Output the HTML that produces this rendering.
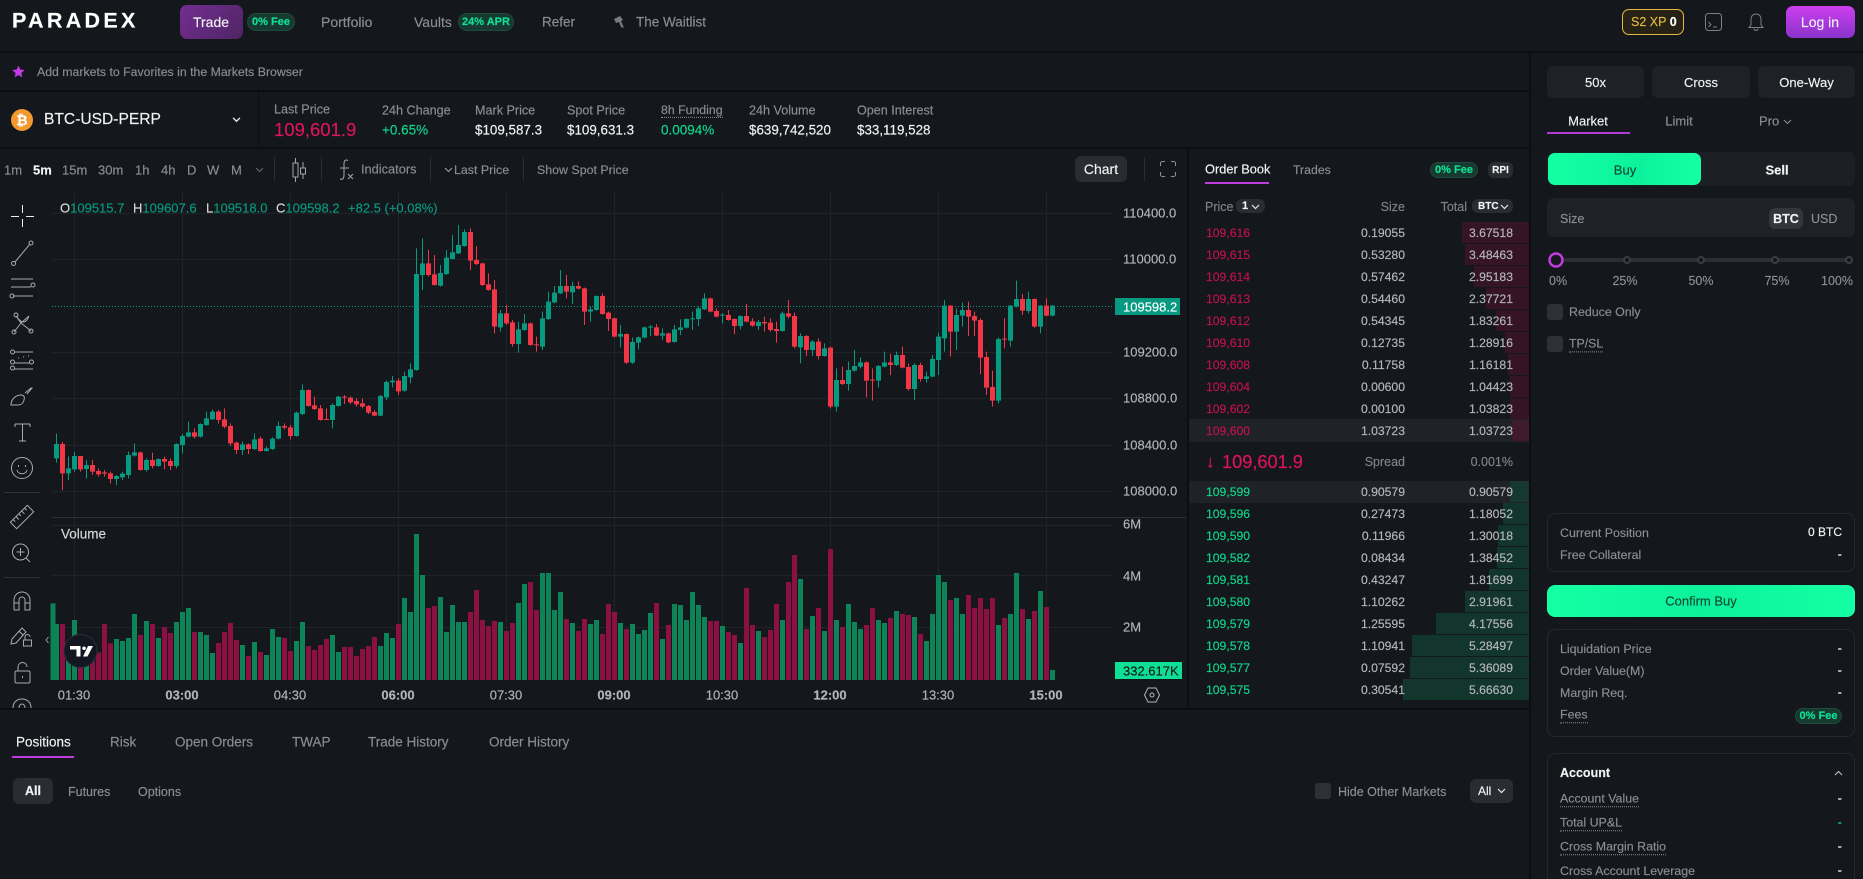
<!DOCTYPE html>
<html><head><meta charset="utf-8"><title>Paradex</title>
<style>
*{box-sizing:border-box}
html,body{margin:0;padding:0;width:1863px;height:879px;overflow:hidden;background:#14171b;font-family:"Liberation Sans",sans-serif;color:#8b8e93;font-size:13px;-webkit-text-stroke:.15px}
#wrap{position:relative;width:1863px;height:879px;overflow:hidden}
.t,.r,.c{position:absolute;white-space:nowrap;line-height:1}
.t{transform:translateY(-50%)}
.r{transform:translate(-100%,-50%)}
.c{transform:translate(-50%,-50%)}
.b{position:absolute}
.w{color:#f2f3f4}
.g{color:#0fd68c}
.pill{position:absolute;background:#173a30;border:1px solid #1f4a3c;color:#10e095;font-weight:bold;font-size:11px;border-radius:9px;display:flex;align-items:center;justify-content:center;white-space:nowrap}
.ln{position:absolute;background:#0c0e11}
.btn{position:absolute;background:#1e2125;border-radius:6px;color:#f2f3f4;display:flex;align-items:center;justify-content:center;font-size:13px}
.ob{font-size:12.2px;color:#b5b7ba}
.box{position:absolute;border:1px solid #25282d;border-radius:8px}
.chk{position:absolute;width:16px;height:16px;background:#2d3036;border-radius:3px}
.u{border-bottom:1px dotted #8b8e93;padding-bottom:2px}
.ax{font-size:13px;color:#b2b5be}
.up{position:absolute;left:1205px;height:2px;background:#c03ae0}
.dp{position:absolute;height:21px}
.p{font-size:12.4px}
svg{position:absolute;overflow:visible}
</style></head><body><div id="wrap">

<!-- separators -->
<div class="ln" style="left:0;top:51px;width:1863px;height:2px"></div>
<div class="ln" style="left:0;top:90px;width:1530px;height:2px"></div>
<div class="ln" style="left:0;top:147px;width:1530px;height:2px"></div>
<div class="ln" style="left:258px;top:92px;width:1px;height:56px"></div>
<div class="ln" style="left:1187px;top:148px;width:2px;height:561px"></div>
<div class="ln" style="left:0;top:708px;width:1530px;height:2px"></div>
<div class="ln" style="left:1529px;top:52px;width:2px;height:827px"></div>

<!-- header -->
<div class="t" style="left:12px;top:21px;font-size:21.5px;font-weight:bold;letter-spacing:3.3px;color:#fff">PARADEX</div>
<div class="b" style="left:180px;top:5px;width:63px;height:34px;border-radius:7px;background:linear-gradient(135deg,#742d92,#4d2563)"></div>
<div class="c w" style="left:211px;top:22px;font-size:14px">Trade</div>
<div class="pill" style="left:247px;top:13px;width:48px;height:18px">0% Fee</div>
<div class="t" style="left:321px;top:22px;font-size:14px">Portfolio</div>
<div class="t" style="left:414px;top:22px;font-size:14px">Vaults</div>
<div class="pill" style="left:458px;top:13px;width:56px;height:18px">24% APR</div>
<div class="t" style="left:542px;top:22px;font-size:13.5px">Refer</div>
<svg style="left:611px;top:14px" width="16" height="16" viewBox="0 0 16 16"><path d="M3 5l6-3 3 4-2 1 3 7-3-1-2-5-3 1z" fill="#777a80"/></svg>
<div class="t" style="left:636px;top:22px;font-size:13.5px">The Waitlist</div>
<div class="b" style="left:1622px;top:9px;width:62px;height:26px;border:1px solid #e5b93f;border-radius:7px;background:#262316"></div>
<div class="t" style="left:1631px;top:22px;font-size:12.5px;color:#e5b93f">S2 XP <b style="color:#fff">0</b></div>
<svg style="left:1705px;top:13px" width="18" height="19" viewBox="0 0 18 19" fill="none" stroke="#7d8085"><rect x=".5" y=".5" width="16" height="17" rx="3"/><path d="M3.500 9l2.500 2.500-2.500 2.500M8 14h4"/></svg>
<svg style="left:1747px;top:13px" width="18" height="19" viewBox="0 0 18 19" fill="none" stroke="#7d8085"><path d="M9 1c-3.500 0-5 2.500-5 5.500V12l-2 2.500h14L14 12V6.500C14 3.500 12.500 1 9 1zM7 15.500c0 2.500 4 2.500 4 0"/></svg>
<div class="b" style="left:1786px;top:6px;width:69px;height:32px;border-radius:7px;background:linear-gradient(180deg,#cb3ef0,#8a33c9)"></div>
<div class="c w" style="left:1820px;top:22px;font-size:14px">Log in</div>

<!-- favorites row -->
<svg style="left:12px;top:65px" width="13" height="13" viewBox="0 0 24 24"><path d="M12 1l3.400 7.400 8 .9-6 5.400 1.700 8L12 18.700 4.900 22.700l1.700-8-6-5.400 8-.9z" fill="#c13ae8"/></svg>
<div class="t" style="left:37px;top:72px;font-size:12.3px">Add markets to Favorites in the Markets Browser</div>

<!-- market info -->
<div class="b" style="left:11px;top:109px;width:22px;height:22px;border-radius:50%;background:#f39a2e"></div>
<div class="c" style="left:22px;top:120px;font-size:14px;color:#fff;font-weight:bold">₿</div>
<div class="t w" style="left:44px;top:120px;font-size:15.600px">BTC-USD-PERP</div>
<svg style="left:232px;top:117px" width="9" height="6" viewBox="0 0 10 7" fill="none" stroke="#e6e6e6" stroke-width="1.600"><path d="M1 1l4 4 4-4"/></svg>
<div class="t" style="left:274px;top:110px;font-size:12.600px">Last Price</div>
<div class="t" style="left:274px;top:130px;font-size:18.500px;color:#e0145c">109,601.9</div>
<div class="t" style="left:382px;top:111px;font-size:12.600px">24h Change</div>
<div class="t g" style="left:382px;top:130px;font-size:13.500px">+0.65%</div>
<div class="t" style="left:475px;top:111px;font-size:12.600px">Mark Price</div>
<div class="t w" style="left:475px;top:130px;font-size:13.400px">$109,587.3</div>
<div class="t" style="left:567px;top:111px;font-size:12.600px">Spot Price</div>
<div class="t w" style="left:567px;top:130px;font-size:13.400px">$109,631.3</div>
<div class="t" style="left:661px;top:111px;font-size:12.300px;border-bottom:1px dotted #8b8e93;padding-bottom:1px">8h Funding</div>
<div class="t g" style="left:661px;top:130px;font-size:13.500px">0.0094%</div>
<div class="t" style="left:749px;top:111px;font-size:12.600px">24h Volume</div>
<div class="t w" style="left:749px;top:130px;font-size:13.400px">$639,742,520</div>
<div class="t" style="left:857px;top:111px;font-size:12.600px">Open Interest</div>
<div class="t w" style="left:857px;top:130px;font-size:13.400px">$33,119,528</div>

<!-- chart toolbar -->
<div class="t" style="left:4px;top:170px">1m</div>
<div class="t w" style="left:33px;top:170px;font-weight:bold">5m</div>
<div class="t" style="left:62px;top:170px">15m</div>
<div class="t" style="left:98px;top:170px">30m</div>
<div class="t" style="left:135px;top:170px">1h</div>
<div class="t" style="left:161px;top:170px">4h</div>
<div class="t" style="left:187px;top:170px">D</div>
<div class="t" style="left:207px;top:170px">W</div>
<div class="t" style="left:231px;top:170px">M</div>
<svg style="left:255px;top:167px" width="9" height="6" viewBox="0 0 9 6" fill="none" stroke="#6b6e73"><path d="M1 1l3.500 3.500L8 1"/></svg>
<div class="b" style="left:274px;top:157px;width:1px;height:24px;background:#2b2e32"></div>
<svg style="left:291px;top:158px" width="16" height="24" viewBox="0 0 16 24" fill="none" stroke="#a4a6aa"><path d="M4.500 0v5M2 5h5v14H2zM4.500 19v5M12 4v6M9.500 10h5v6h-5zM12 16v5"/></svg>
<div class="b" style="left:321px;top:157px;width:1px;height:24px;background:#2b2e32"></div>
<svg style="left:337px;top:159px" width="17" height="22" viewBox="0 0 17 22" fill="none" stroke="#a4a6aa"><path d="M11 1.500C8 0 7 2 7 5v11c0 3-1 5-4 4M3 9h9M11 15l5 5M16 15l-5 5"/></svg>
<div class="t" style="left:361px;top:170px;font-size:12.800px">Indicators</div>
<div class="b" style="left:430px;top:157px;width:1px;height:24px;background:#2b2e32"></div>
<svg style="left:444px;top:167px" width="9" height="6" viewBox="0 0 9 6" fill="none" stroke="#a4a6aa"><path d="M1 1l3.500 3.500L8 1"/></svg>
<div class="t" style="left:454px;top:170px;font-size:12.400px">Last Price</div>
<div class="b" style="left:523px;top:157px;width:1px;height:24px;background:#2b2e32"></div>
<div class="t" style="left:537px;top:170px;font-size:12.400px">Show Spot Price</div>
<div class="btn" style="left:1075px;top:156px;width:52px;height:26px;background:#2a2c32;font-size:14px">Chart</div>
<div class="b" style="left:1144px;top:157px;width:1px;height:24px;background:#2b2e32"></div>
<svg style="left:1160px;top:161px" width="16" height="16" viewBox="0 0 16 16" fill="none" stroke="#8f9195"><path d="M.500 5V2.500a2 2 0 0 1 2-2H5M11 .5h2.500a2 2 0 0 1 2 2V5M15.500 11v2.500a2 2 0 0 1-2 2H11M5 15.500H2.500a2 2 0 0 1-2-2V11"/></svg>

<!-- chart svg -->
<svg style="left:0;top:0" width="1863" height="879" viewBox="0 0 1863 879">
 <g fill="none" stroke="#202327" stroke-width="1">
  <path d="M52 213.500H1113M52 259.500H1113M52 352.500H1113M52 398.500H1113M52 445.500H1113M52 491.500H1113M52 525.500H1113M52 575.500H1113M52 627.500H1113"/>
  <path d="M74.500 192V680M182.500 192V680M290.500 192V680M398.500 192V680M506.500 192V680M614.500 192V680M722.500 192V680M830.500 192V680M938.500 192V680M1046.500 192V680"/>
 </g>
 <path d="M52 517.500H1186" stroke="#2e3135"/>
 <path d="M52 306.500H1113" stroke="#089981" stroke-dasharray="1 2" fill="none"/>
 <!-- volume -->
 <g transform="translate(0,500) scale(1,.33333)" fill="none" stroke-width="5">
  <path stroke="#0c8457" d="M53 310V540M56.500 372V540M68.500 440V540M74.500 360V540M86.500 480V540M116.500 417V540M122.500 423V540M128.500 414V540M134.500 342V540M146.500 363V540M158.500 414V540M176.500 366V540M182.500 336V540M188.500 324V540M200.500 396V540M206.500 405V540M212.500 459V540M242.500 435V540M254.500 426V540M266.500 465V540M272.500 387V540M278.500 411V540M296.500 423V540M302.500 366V540M332.500 405V540M338.500 456V540M380.500 438V540M386.500 399V540M392.500 414V540M404.500 294V540M410.500 336V540M416.500 102V540M422.500 225V540M440.500 291V540M446.500 396V540M452.500 315V540M458.500 366V540M464.500 366V540M500.500 366V540M518.500 309V540M524.500 252V540M542.500 219V540M548.500 219V540M554.500 330V540M560.500 276V540M572.500 369V540M590.500 372V540M596.500 360V540M620.500 369V540M632.500 372V540M638.500 402V540M644.500 390V540M650.500 339V540M662.500 417V540M674.500 312V540M680.500 315V540M686.500 360V540M692.500 276V540M698.500 315V540M704.500 351V540M722.500 378V540M740.500 429V540M758.500 393V540M782.500 360V540M800.500 237V540M812.500 348V540M824.500 393V540M836.500 360V540M848.500 312V540M854.500 366V540M860.500 387V540M878.500 360V540M884.500 369V540M896.500 333V540M914.500 351V540M926.500 423V540M932.500 342V540M938.500 225V540M944.500 246V540M956.500 294V540M962.500 342V540M998.500 375V540M1010.500 342V540M1016.500 219V540M1028.500 357V540M1040.500 273V540M1052.500 510V540"/>
  <path stroke="#8c1142" d="M62.500 372V540M80.500 490V540M92.500 470V540M98.500 457V540M104.500 372V540M110.500 430V540M140.500 405V540M152.500 372V540M164.500 381V540M170.500 399V540M194.500 396V540M218.500 429V540M224.500 396V540M230.500 369V540M236.500 420V540M248.500 468V540M260.500 456V540M284.500 414V540M290.500 453V540M308.500 438V540M314.500 450V540M320.500 435V540M326.500 417V540M344.500 441V540M350.500 441V540M356.500 468V540M362.500 447V540M368.500 438V540M374.500 411V540M398.500 372V540M428.500 324V540M434.500 318V540M470.500 336V540M476.500 270V540M482.500 360V540M488.500 378V540M494.500 363V540M506.500 393V540M512.500 369V540M530.500 246V540M536.500 330V540M566.500 357V540M578.500 393V540M584.500 357V540M602.500 402V540M608.500 312V540M614.500 336V540M626.500 387V540M656.500 309V540M668.500 375V540M710.500 363V540M716.500 363V540M728.500 396V540M734.500 405V540M746.500 264V540M752.500 375V540M764.500 411V540M770.500 390V540M776.500 312V540M788.500 246V540M794.500 165V540M806.500 387V540M818.500 324V540M830.500 147V540M842.500 381V540M866.500 375V540M872.500 324V540M890.500 354V540M902.500 342V540M908.500 345V540M920.500 402V540M950.500 300V540M968.500 285V540M974.500 324V540M980.500 294V540M986.500 327V540M992.500 294V540M1004.500 354V540M1022.500 327V540M1034.500 333V540M1046.500 321V540"/>
 </g>
 <!-- candles -->
 <g transform="translate(0,150) scale(1,.33333)" fill="none">
  <path stroke="#089981" stroke-width="1" d="M56.500 851V938M68.500 920V990M74.500 905V965M86.500 930V985M116.500 975V1005M122.500 965V990M128.500 905V985M134.500 880V920M146.500 925V965M158.500 925V950M176.500 880V955M182.500 852V910M188.500 815V862M200.500 820V862M206.500 785V828M212.500 778V810M242.500 875V915M254.500 850V900M266.500 890V905M272.500 862V900M278.500 815V868M296.500 785V860M302.500 703V795M332.500 760V835M338.500 738V770M380.500 735V798M386.500 692V750M392.500 678V712M404.500 665V725M410.500 640V700M416.500 295V662M422.500 265V420M440.500 345V410M446.500 300V375M452.500 255V328M458.500 225V312M464.500 238V290M500.500 480V545M518.500 515V608M524.500 492V542M542.500 485V600M548.500 425V510M554.500 408V460M560.500 360V432M572.500 395V462M590.500 470V515M596.500 436V482M620.500 525V592M632.500 562V642M638.500 560V598M644.500 530V565M650.500 525V558M662.500 535V570M674.500 525V578M680.500 508V555M686.500 505V535M692.500 485V540M698.500 470V528M704.500 430V480M722.500 490V520M740.500 496V538M758.500 510V540M782.500 485V545M800.500 550V640M812.500 570V618M824.500 580V620M836.500 655V785M848.500 635V722M854.500 600V665M860.500 622V655M878.500 645V712M884.500 605V652M896.500 605V648M914.500 640V750M926.500 665V698M932.500 615V682M938.500 548V675M944.500 450V605M956.500 475V600M962.500 458V530M998.500 562V760M1010.500 465V590M1016.500 392V472M1028.500 425V490M1040.500 465V550M1052.500 465V499"/>
  <path stroke="#089981" stroke-width="5" d="M56.500 882V925M68.500 955V970M74.500 918V958M86.500 945V957M116.500 978V987M122.500 971V982M128.500 915V975M134.500 907V917M146.500 930V960M158.500 927V948M176.500 882V948M182.500 858V885M188.500 847V860M200.500 822V860M206.500 805V825M212.500 785V808M242.500 883V900M254.500 868V897M266.500 895V903M272.500 866V897M278.500 828V866M296.500 788V858M302.500 720V792M332.500 765V810M338.500 740V768M380.500 738V797M386.500 696V742M392.500 692V697M404.500 678V722M410.500 658V682M416.500 372V660M422.500 340V375M440.500 369V407M446.500 323V372M452.500 307V327M458.500 285V310M464.500 246V288M500.500 490V532M518.500 538V582M524.500 520V540M542.500 505V590M548.500 455V507M554.500 428V457M560.500 408V430M572.500 408V427M590.500 478V485M596.500 438V480M620.500 552V560M632.500 576V638M638.500 562V578M644.500 532V563M650.500 530V533M662.500 550V557M674.500 538V576M680.500 532V540M686.500 507V533M692.500 505V508M698.500 475V507M704.500 445V478M722.500 494V497M740.500 498V528M758.500 516V528M782.500 490V543M800.500 558V592M812.500 575V600M824.500 595V618M836.500 690V770M848.500 660V702M854.500 648V662M860.500 637V650M878.500 648V692M884.500 637V650M896.500 615V645M914.500 645V717M926.500 679V687M932.500 627V680M938.500 560V630M944.500 467V565M956.500 495V545M962.500 480V497M998.500 567V752M1010.500 467V572M1016.500 447V470M1028.500 447V483M1040.500 467V530M1052.500 467V497"/>
  <path stroke="#f23645" stroke-width="1" d="M62.500 875V1020M80.500 918V965M92.500 930V975M98.500 955V980M104.500 960V980M110.500 965V1000M140.500 905V962M152.500 908V955M164.500 920V958M170.500 925V960M194.500 835V865M218.500 780V820M224.500 775V835M230.500 820V888M236.500 875V912M248.500 880V912M260.500 860V905M284.500 820V838M290.500 825V868M308.500 718V770M314.500 740V780M320.500 765V812M326.500 775V810M344.500 735V762M350.500 740V762M356.500 745V770M362.500 745V775M368.500 765V792M374.500 780V798M398.500 685V735M428.500 300V380M434.500 315V407M470.500 235V360M476.500 288V345M482.500 338V408M488.500 370V422M494.500 390V550M506.500 465V525M512.500 510V590M530.500 518V587M536.500 560V605M566.500 375V445M578.500 395V418M584.500 413V525M602.500 430V494M608.500 485V543M614.500 503V562M626.500 550V642M656.500 522V558M668.500 548V580M710.500 443V487M716.500 475V502M728.500 480V512M734.500 505V552M746.500 462V517M752.500 505V530M764.500 500V545M770.500 505V545M776.500 515V578M788.500 450V505M794.500 488V595M806.500 555V618M818.500 565V628M830.500 590V775M842.500 650V705M866.500 635V742M872.500 655V752M890.500 612V675M902.500 590V655M908.500 640V722M920.500 638V695M950.500 465V620M968.500 455V558M974.500 485V558M980.500 505V672M986.500 605V735M992.500 662V770M1004.500 505V595M1022.500 432V495M1034.500 445V533M1046.500 445V499"/>
  <path stroke="#f23645" stroke-width="5" d="M62.500 882V970M80.500 918V958M92.500 945V965M98.500 963V973M104.500 967V971M110.500 970V987M140.500 907V960M152.500 930V948M164.500 927V935M170.500 933V948M194.500 847V860M218.500 785V810M224.500 808V830M230.500 828V880M236.500 878V900M248.500 883V897M260.500 866V903M284.500 828V833M290.500 832V858M308.500 720V768M314.500 766V777M320.500 775V810M326.500 807V810M344.500 740V743M350.500 743V757M356.500 753V763M362.500 760V770M368.500 768V788M374.500 786V797M398.500 692V724M428.500 340V375M434.500 373V405M470.500 246V332M476.500 330V342M482.500 340V405M488.500 403V420M494.500 418V530M506.500 490V520M512.500 517V582M530.500 520V585M536.500 583V586M566.500 408V425M578.500 408V416M584.500 415V485M602.500 438V492M608.500 488V507M614.500 505V560M626.500 552V638M656.500 532V557M668.500 550V577M710.500 445V485M716.500 483V500M728.500 495V510M734.500 507V528M746.500 498V515M752.500 514V527M764.500 516V520M770.500 518V540M776.500 537V543M788.500 490V500M794.500 498V590M806.500 558V600M818.500 575V618M830.500 593V770M842.500 690V702M866.500 637V692M872.500 689V692M890.500 637V645M902.500 615V653M908.500 651V717M920.500 645V687M950.500 467V545M968.500 480V500M974.500 498V512M980.500 510V623M986.500 621V713M992.500 711V752M1004.500 566V569M1022.500 447V482M1034.500 447V530M1046.500 467V497"/>
 </g>
 <!-- left toolbar icons -->
 <g fill="none" stroke="#a9abaf" stroke-width="1">
  <path stroke="#eceff2" d="M22.500 213V205M22.500 219V227M19 216.500H11M26 216.500H34"/>
  <path d="M15 262L30 244"/><circle cx="13.500" cy="263.500" r="2"/><circle cx="31" cy="243" r="2"/>
  <path d="M11 279H33M11 287H31M13 296H33"/><circle cx="33" cy="285" r="2"/><circle cx="12" cy="296" r="2"/>
  <path d="M16 316l5 7 8-7M21 323l-7 9M21 323l10 8M16 316c6 8 10 8 13 0"/><circle cx="16" cy="315" r="2"/><circle cx="14" cy="332" r="2"/><circle cx="31" cy="331" r="2"/>
  <path d="M14 352H33M14 363H30M14 369H33"/><circle cx="12.500" cy="352" r="2"/><circle cx="12.500" cy="362" r="2"/><circle cx="31.500" cy="362" r="2"/><circle cx="12.500" cy="368" r="2"/><path d="M18 358l2-.5M23 357l2-.5M28 356l2-.5" stroke-dasharray="1 1"/>
  <path d="M11 405c0-6 5-10 10-10 3 0 4 2 3 5-1 4-3 5-6 5zM25 393l6-5 1 0-5 6"/>
  <path d="M15 424H30M22.500 424V441M19 441H26M15 424v3M30 424v3"/>
  <circle cx="22" cy="468" r="10.500"/><path d="M17 470c1 5 9 5 10 0M18.500 465v2M25.500 465v2"/>
  <path stroke="#2e3135" d="M4 492.500H40M4 577.500H40"/>
  <g transform="rotate(-45 22 517)"><rect x="10" y="512.500" width="24" height="9"/><path d="M14 512.500v3M18 512.500v4M22 512.500v3M26 512.500v4M30 512.500v3"/></g>
  <circle cx="20.500" cy="552" r="8"/><path d="M26 558l4 4M20.500 548v8M16.500 552h8"/>
  <path d="M14 610V600a8 8 0 0 1 16 0V610M14 603h5M25 603h5M14 610h5V600a3 3 0 0 1 6 0V610h5"/>
  <path d="M12 639l10-11 4 4-10 11-5 1zM19 631l4 4"/><rect x="23.500" y="640" width="8" height="6"/><path d="M25 640v-3a2.500 2.500 0 0 1 5 0"/>
  <rect x="15" y="671" width="15" height="12" rx="1.500"/><path d="M18 671v-4a4.500 4.500 0 0 1 9 0M22.500 676v2"/>
  <path d="M13 708c0-6 4-9 9-9s9 3 9 9"/><path d="M19 708c0-2 1-4 3-4s3 2 3 4"/>
  <path d="M48.500 637l-2.500 3 2.500 3" stroke="#8b8e93"/>
  <!-- settings hexagon -->
  <path d="M1148 688h8l3.500 7-3.500 7h-8l-3.500-7z" stroke="#b2b5be"/><circle cx="1152" cy="695" r="2" stroke="#b2b5be"/>
 </g>
 <path d="M0 709H1529V712H0z" fill="#14171b"/>
 <path d="M0 708H1529V710H0z" fill="#0c0e11"/>
 <!-- TV logo -->
 <circle cx="80.500" cy="651" r="16.500" fill="#131722" stroke="#2a2e39"/>
 <path d="M70 646h10.500v10.500h-4v-7H70zM88 646h5l-5.500 10.500h-4.500zM84 646.500a1.800 1.800 0 1 0 .1 0z" fill="#fff"/>
</svg>

<!-- OHLC -->
<div class="t" style="left:60px;top:208px;font-size:13px;color:#089981"><span style="color:#d8d9db">O</span>109515.7</div>
<div class="t" style="left:133px;top:208px;font-size:13px;color:#089981"><span style="color:#d8d9db">H</span>109607.6</div>
<div class="t" style="left:206px;top:208px;font-size:13px;color:#089981"><span style="color:#d8d9db">L</span>109518.0</div>
<div class="t" style="left:276px;top:208px;font-size:13px;color:#089981"><span style="color:#d8d9db">C</span>109598.2</div>
<div class="t" style="left:348px;top:208px;font-size:13px;color:#089981">+82.5 (+0.08%)</div>
<div class="t" style="left:61px;top:534px;font-size:13.500px;color:#d8d9db">Volume</div>

<!-- axis -->
<div class="t ax" style="left:1123px;top:213px">110400.0</div>
<div class="t ax" style="left:1123px;top:259px">110000.0</div>
<div class="t ax" style="left:1123px;top:352px">109200.0</div>
<div class="t ax" style="left:1123px;top:398px">108800.0</div>
<div class="t ax" style="left:1123px;top:445px">108400.0</div>
<div class="t ax" style="left:1123px;top:491px">108000.0</div>
<div class="b" style="left:1115px;top:298px;width:65px;height:17px;background:#089981"></div>
<div class="t" style="left:1123px;top:306.500px;font-size:13px;color:#fff">109598.2</div>
<div class="t ax" style="left:1123px;top:524px">6M</div>
<div class="t ax" style="left:1123px;top:576px">4M</div>
<div class="t ax" style="left:1123px;top:627px">2M</div>
<div class="b" style="left:1115px;top:662px;width:67px;height:17px;background:#0ddf95"></div>
<div class="t" style="left:1123px;top:670.500px;font-size:13px;color:#13171b">332.617K</div>
<div class="c ax" style="left:74px;top:695px">01:30</div>
<div class="c ax" style="left:182px;top:695px;font-weight:bold">03:00</div>
<div class="c ax" style="left:290px;top:695px">04:30</div>
<div class="c ax" style="left:398px;top:695px;font-weight:bold">06:00</div>
<div class="c ax" style="left:506px;top:695px">07:30</div>
<div class="c ax" style="left:614px;top:695px;font-weight:bold">09:00</div>
<div class="c ax" style="left:722px;top:695px">10:30</div>
<div class="c ax" style="left:830px;top:695px;font-weight:bold">12:00</div>
<div class="c ax" style="left:938px;top:695px">13:30</div>
<div class="c ax" style="left:1046px;top:695px;font-weight:bold">15:00</div>

<!-- order book -->
<div class="t w" style="left:1205px;top:170px;font-size:12.800px">Order Book</div>
<div class="up" style="top:182px;width:64px"></div>
<div class="t" style="left:1293px;top:170px;font-size:12.300px">Trades</div>
<div class="pill" style="left:1430px;top:162px;width:48px;height:16px">0% Fee</div>
<div class="btn" style="left:1488px;top:162px;width:25px;height:16px;background:#2a2c32;font-size:10px;font-weight:bold">RPI</div>
<div class="t" style="left:1205px;top:207px;font-size:12.500px;color:#7f8287">Price</div>
<div class="btn" style="left:1236px;top:199px;width:29px;height:14px;background:#2a2c32;font-size:11px;font-weight:bold;justify-content:flex-start;padding-left:6px">1</div>
<svg style="left:1251px;top:204px" width="9" height="6" viewBox="0 0 9 6" fill="none" stroke="#e6e6e6" stroke-width="1.200"><path d="M1 1l3.500 3.500L8 1"/></svg>
<div class="r" style="left:1405px;top:207px;font-size:12.500px;color:#7f8287">Size</div>
<div class="r" style="left:1467px;top:207px;font-size:12.500px;color:#7f8287">Total</div>
<div class="btn" style="left:1472px;top:199px;width:41px;height:14px;background:#2a2c32;font-size:10px;font-weight:bold;justify-content:flex-start;padding-left:6px">BTC</div>
<svg style="left:1500px;top:204px" width="9" height="6" viewBox="0 0 9 6" fill="none" stroke="#e6e6e6" stroke-width="1.200"><path d="M1 1l3.500 3.500L8 1"/></svg>

<div class="b" style="left:1189px;top:419px;width:340px;height:23px;background:#1f2327"></div>
<div class="b" style="left:1189px;top:481px;width:340px;height:22px;background:#1f2327"></div>

<!-- red depth -->
<div class="dp" style="left:1462px;top:222px;width:67px;background:#351525"></div>
<div class="dp" style="left:1465px;top:244px;width:64px;background:#351525"></div>
<div class="dp" style="left:1474px;top:266px;width:55px;background:#351525"></div>
<div class="dp" style="left:1486px;top:288px;width:43px;background:#351525"></div>
<div class="dp" style="left:1496px;top:310px;width:33px;background:#351525"></div>
<div class="dp" style="left:1505px;top:332px;width:24px;background:#351525"></div>
<div class="dp" style="left:1508px;top:354px;width:21px;background:#351525"></div>
<div class="dp" style="left:1510px;top:376px;width:19px;background:#351525"></div>
<div class="dp" style="left:1510px;top:398px;width:19px;background:#351525"></div>
<div class="dp" style="left:1512px;top:420px;width:17px;background:#3f1a2c"></div>
<!-- green depth -->
<div class="dp" style="left:1510px;top:481px;width:19px;background:#17382e"></div>
<div class="dp" style="left:1503px;top:503px;width:26px;background:#12362b"></div>
<div class="dp" style="left:1498px;top:525px;width:31px;background:#12362b"></div>
<div class="dp" style="left:1497px;top:547px;width:32px;background:#12362b"></div>
<div class="dp" style="left:1489px;top:569px;width:40px;background:#12362b"></div>
<div class="dp" style="left:1465px;top:591px;width:64px;background:#12362b"></div>
<div class="dp" style="left:1436px;top:613px;width:93px;background:#12362b"></div>
<div class="dp" style="left:1412px;top:635px;width:117px;background:#12362b"></div>
<div class="dp" style="left:1410px;top:657px;width:119px;background:#12362b"></div>
<div class="dp" style="left:1403px;top:679px;width:126px;background:#12362b"></div>

<!-- red rows -->
<div class="t ob" style="left:1206px;top:233px;color:#c0134c">109,616</div><div class="r ob" style="left:1405px;top:233px">0.19055</div><div class="r ob" style="left:1513px;top:233px">3.67518</div>
<div class="t ob" style="left:1206px;top:255px;color:#c0134c">109,615</div><div class="r ob" style="left:1405px;top:255px">0.53280</div><div class="r ob" style="left:1513px;top:255px">3.48463</div>
<div class="t ob" style="left:1206px;top:277px;color:#c0134c">109,614</div><div class="r ob" style="left:1405px;top:277px">0.57462</div><div class="r ob" style="left:1513px;top:277px">2.95183</div>
<div class="t ob" style="left:1206px;top:299px;color:#c0134c">109,613</div><div class="r ob" style="left:1405px;top:299px">0.54460</div><div class="r ob" style="left:1513px;top:299px">2.37721</div>
<div class="t ob" style="left:1206px;top:321px;color:#c0134c">109,612</div><div class="r ob" style="left:1405px;top:321px">0.54345</div><div class="r ob" style="left:1513px;top:321px">1.83261</div>
<div class="t ob" style="left:1206px;top:343px;color:#c0134c">109,610</div><div class="r ob" style="left:1405px;top:343px">0.12735</div><div class="r ob" style="left:1513px;top:343px">1.28916</div>
<div class="t ob" style="left:1206px;top:365px;color:#c0134c">109,608</div><div class="r ob" style="left:1405px;top:365px">0.11758</div><div class="r ob" style="left:1513px;top:365px">1.16181</div>
<div class="t ob" style="left:1206px;top:387px;color:#c0134c">109,604</div><div class="r ob" style="left:1405px;top:387px">0.00600</div><div class="r ob" style="left:1513px;top:387px">1.04423</div>
<div class="t ob" style="left:1206px;top:409px;color:#c0134c">109,602</div><div class="r ob" style="left:1405px;top:409px">0.00100</div><div class="r ob" style="left:1513px;top:409px">1.03823</div>
<div class="t ob" style="left:1206px;top:431px;color:#c0134c">109,600</div><div class="r ob" style="left:1405px;top:431px">1.03723</div><div class="r ob" style="left:1513px;top:431px">1.03723</div>

<!-- spread -->
<div class="t" style="left:1206px;top:462px;font-size:17px;color:#e0145c">↓</div>
<div class="t" style="left:1222px;top:462px;font-size:18.200px;color:#e0145c">109,601.9</div>
<div class="r" style="left:1405px;top:462px;font-size:12.500px;color:#7f8287">Spread</div>
<div class="r" style="left:1513px;top:462px;font-size:12.500px;color:#7f8287">0.001%</div>

<!-- green rows -->
<div class="t ob" style="left:1206px;top:492px;color:#0fd68c">109,599</div><div class="r ob" style="left:1405px;top:492px">0.90579</div><div class="r ob" style="left:1513px;top:492px">0.90579</div>
<div class="t ob" style="left:1206px;top:514px;color:#0fd68c">109,596</div><div class="r ob" style="left:1405px;top:514px">0.27473</div><div class="r ob" style="left:1513px;top:514px">1.18052</div>
<div class="t ob" style="left:1206px;top:536px;color:#0fd68c">109,590</div><div class="r ob" style="left:1405px;top:536px">0.11966</div><div class="r ob" style="left:1513px;top:536px">1.30018</div>
<div class="t ob" style="left:1206px;top:558px;color:#0fd68c">109,582</div><div class="r ob" style="left:1405px;top:558px">0.08434</div><div class="r ob" style="left:1513px;top:558px">1.38452</div>
<div class="t ob" style="left:1206px;top:580px;color:#0fd68c">109,581</div><div class="r ob" style="left:1405px;top:580px">0.43247</div><div class="r ob" style="left:1513px;top:580px">1.81699</div>
<div class="t ob" style="left:1206px;top:602px;color:#0fd68c">109,580</div><div class="r ob" style="left:1405px;top:602px">1.10262</div><div class="r ob" style="left:1513px;top:602px">2.91961</div>
<div class="t ob" style="left:1206px;top:624px;color:#0fd68c">109,579</div><div class="r ob" style="left:1405px;top:624px">1.25595</div><div class="r ob" style="left:1513px;top:624px">4.17556</div>
<div class="t ob" style="left:1206px;top:646px;color:#0fd68c">109,578</div><div class="r ob" style="left:1405px;top:646px">1.10941</div><div class="r ob" style="left:1513px;top:646px">5.28497</div>
<div class="t ob" style="left:1206px;top:668px;color:#0fd68c">109,577</div><div class="r ob" style="left:1405px;top:668px">0.07592</div><div class="r ob" style="left:1513px;top:668px">5.36089</div>
<div class="t ob" style="left:1206px;top:690px;color:#0fd68c">109,575</div><div class="r ob" style="left:1405px;top:690px">0.30541</div><div class="r ob" style="left:1513px;top:690px">5.66630</div>

<!-- bottom -->
<div class="t w" style="left:16px;top:742px;font-size:13.500px">Positions</div>
<div class="b" style="left:12px;top:756px;width:62px;height:2px;background:#c03ae0"></div>
<div class="t" style="left:110px;top:742px;font-size:13.500px">Risk</div>
<div class="t" style="left:175px;top:742px;font-size:13.500px">Open Orders</div>
<div class="t" style="left:292px;top:742px;font-size:13.500px">TWAP</div>
<div class="t" style="left:368px;top:742px;font-size:13.500px">Trade History</div>
<div class="t" style="left:489px;top:742px;font-size:13.500px">Order History</div>
<div class="btn" style="left:13px;top:778px;width:40px;height:26px;background:#2a2c32;font-weight:bold;font-size:12.500px">All</div>
<div class="t" style="left:68px;top:792px;font-size:12.500px">Futures</div>
<div class="t" style="left:138px;top:792px;font-size:12.500px">Options</div>
<div class="chk" style="left:1315px;top:783px"></div>
<div class="t" style="left:1338px;top:792px;font-size:12.500px">Hide Other Markets</div>
<div class="btn" style="left:1470px;top:779px;width:43px;height:24px;background:#2a2c32;font-size:12px;justify-content:flex-start;padding-left:8px">All</div>
<svg style="left:1497px;top:788px" width="9" height="6" viewBox="0 0 9 6" fill="none" stroke="#e6e6e6" stroke-width="1.200"><path d="M1 1l3.500 3.500L8 1"/></svg>

<!-- right panel -->
<div class="btn" style="left:1547px;top:66px;width:97px;height:32px">50x</div>
<div class="btn" style="left:1652px;top:66px;width:98px;height:32px">Cross</div>
<div class="btn" style="left:1758px;top:66px;width:97px;height:32px">One-Way</div>
<div class="c w" style="left:1588px;top:121px">Market</div>
<div class="b" style="left:1547px;top:132px;width:83px;height:2px;background:#b23bd8"></div>
<div class="c" style="left:1679px;top:121px">Limit</div>
<div class="t" style="left:1759px;top:121px">Pro</div>
<svg style="left:1783px;top:119px" width="9" height="6" viewBox="0 0 9 6" fill="none" stroke="#8b8e93"><path d="M1 1l3.500 3.500L8 1"/></svg>
<div class="b" style="left:1547px;top:152px;width:308px;height:34px;background:#1c1f23;border-radius:7px"></div>
<div class="b" style="left:1548px;top:153px;width:153px;height:32px;border-radius:7px;background:linear-gradient(90deg,#14ffa4,#0cf29c 60%,#14ffa4)"></div>
<div class="c" style="left:1625px;top:170px;color:#0f4a34">Buy</div>
<div class="c w" style="left:1777px;top:170px;font-weight:bold">Sell</div>
<div class="b" style="left:1547px;top:198px;width:308px;height:39px;background:#1e2125;border-radius:7px"></div>
<div class="t" style="left:1560px;top:219px;font-size:12.500px">Size</div>
<div class="btn" style="left:1769px;top:208px;width:34px;height:21px;background:#33363c;font-size:12.500px;font-weight:bold">BTC</div>
<div class="t" style="left:1811px;top:219px;font-size:12.500px">USD</div>
<div class="b" style="left:1556px;top:258px;width:294px;height:4px;background:#2b2e32"></div>
<svg style="left:1540px;top:245px" width="320" height="30" viewBox="0 0 320 30"><g fill="#14171b" stroke="#3a3d42" stroke-width="2"><circle cx="87" cy="15" r="3"/><circle cx="161" cy="15" r="3"/><circle cx="235" cy="15" r="3"/><circle cx="309" cy="15" r="3"/></g><circle cx="16" cy="15" r="6.500" fill="#14171b" stroke="#c23ae0" stroke-width="2.500"/></svg>
<div class="t" style="left:1549px;top:281px;font-size:12.500px">0%</div>
<div class="c" style="left:1625px;top:281px;font-size:12.500px">25%</div>
<div class="c" style="left:1701px;top:281px;font-size:12.500px">50%</div>
<div class="c" style="left:1777px;top:281px;font-size:12.500px">75%</div>
<div class="r" style="left:1853px;top:281px;font-size:12.500px">100%</div>
<div class="chk" style="left:1547px;top:304px"></div>
<div class="t p" style="left:1569px;top:312px">Reduce Only</div>
<div class="chk" style="left:1547px;top:336px"></div>
<div class="t u" style="left:1569px;top:345px;font-size:12.300px">TP/SL</div>

<div class="box" style="left:1547px;top:513px;width:308px;height:59px"></div>
<div class="t p" style="left:1560px;top:533px">Current Position</div>
<div class="r w" style="left:1842px;top:532px;font-size:12px">0 BTC</div>
<div class="t p" style="left:1560px;top:555px">Free Collateral</div>
<div class="r w" style="left:1842px;top:554px">-</div>
<div class="b" style="left:1547px;top:585px;width:308px;height:32px;border-radius:8px;background:linear-gradient(90deg,#14ffa4,#0cf29c 50%,#14ffa4)"></div>
<div class="c" style="left:1701px;top:601px;color:#0f4a34">Confirm Buy</div>
<div class="box" style="left:1547px;top:629px;width:308px;height:108px"></div>
<div class="t p" style="left:1560px;top:649px">Liquidation Price</div>
<div class="r w" style="left:1842px;top:648px">-</div>
<div class="t p" style="left:1560px;top:671px">Order Value(M)</div>
<div class="r w" style="left:1842px;top:670px">-</div>
<div class="t p" style="left:1560px;top:693px">Margin Req.</div>
<div class="r w" style="left:1842px;top:692px">-</div>
<div class="t u p" style="left:1560px;top:716px">Fees</div>
<div class="pill" style="left:1795px;top:708px;width:47px;height:16px">0% Fee</div>
<div class="box" style="left:1547px;top:753px;width:308px;height:140px"></div>
<div class="t w" style="left:1560px;top:773px;font-size:12.500px;font-weight:bold">Account</div>
<svg style="left:1834px;top:770px" width="9" height="6" viewBox="0 0 9 6" fill="none" stroke="#b8babd" stroke-width="1.200"><path d="M1 5l3.500-3.500L8 5"/></svg>
<div class="t u p" style="left:1560px;top:800px">Account Value</div>
<div class="r w" style="left:1842px;top:798px">-</div>
<div class="t u p" style="left:1560px;top:824px">Total UP&amp;L</div>
<div class="r g" style="left:1842px;top:822px">-</div>
<div class="t u p" style="left:1560px;top:848px">Cross Margin Ratio</div>
<div class="r w" style="left:1842px;top:846px">-</div>
<div class="t p" style="left:1560px;top:871px">Cross Account Leverage</div>
<div class="r w" style="left:1842px;top:870px">-</div>
</div></body></html>
